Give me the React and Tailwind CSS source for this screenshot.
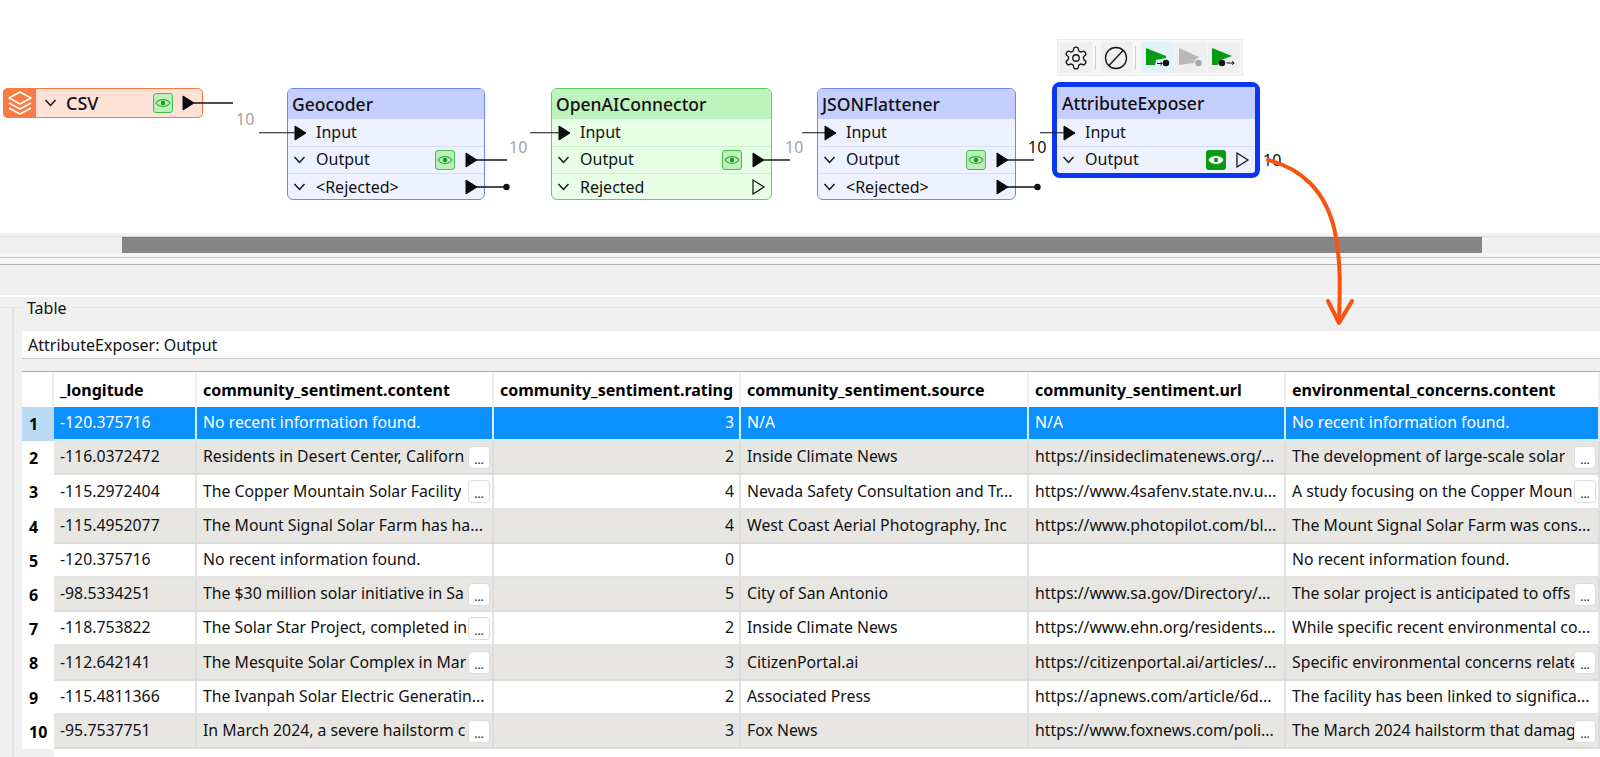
import React from "react";

const Tri = ({ open = false }) => (
  <svg width="13" height="16" viewBox="0 0 13 16" className="shrink-0">
    <polygon points="1,1 12,8 1,15" fill={open ? "none" : "#0a0a0a"} stroke="#0a0a0a" strokeWidth={open ? 1.2 : 1} />
  </svg>
);

const Chevron = () => (
  <svg width="13" height="8" viewBox="0 0 13 8" className="shrink-0">
    <path d="M1.5 1 L6.5 6.5 L11.5 1" fill="none" stroke="#111" strokeWidth="1.4" />
  </svg>
);

const Eye = ({ solid = false }) => (
  <div className={solid ? "flex h-[20px] w-[20px] items-center justify-center rounded-[3px] bg-[#079b12]" : "flex h-[20px] w-[20px] items-center justify-center rounded-[3px] border border-[#3fc04a] bg-[#bdf0b8]"}>
    <svg width="16" height="12" viewBox="0 0 16 12">
      <path d="M1 6 C4 1.5 12 1.5 15 6 C12 10.5 4 10.5 1 6 Z" fill={solid ? "#fff" : "none"} stroke={solid ? "#fff" : "#3aa845"} strokeWidth="1.1" />
      <circle cx="8" cy="6" r="2.2" fill={solid ? "#079b12" : "#0d9f1a"} />
    </svg>
  </div>
);

const Wire = ({ width, dot = false }) => (
  <svg width={width} height="8" viewBox={`0 0 ${width} 8`} className="absolute left-[8px] top-1/2 -translate-y-1/2">
    <line x1="0" y1="4" x2={width - (dot ? 3 : 0)} y2="4" stroke="#111" strokeWidth="1.4" />
    {dot && <circle cx={width - 3.5} cy="4" r="3.2" fill="#111" />}
  </svg>
);

const OutPort = ({ wire, dot, open }) => (
  <div className="relative flex h-[16px] w-[13px] shrink-0 items-center">
    <Tri open={open} />
    {wire ? <Wire width={wire} dot={dot} /> : null}
  </div>
);

const InRow = ({ tone, wire }) => (
  <div className={`relative flex h-[27px] items-center pl-[6px] text-[16px] ${tone}`}>
    <div className="relative flex h-[16px] w-[13px] shrink-0 items-center">
      <div className="absolute right-[8px] top-1/2 h-[1.5px] -translate-y-1/2 bg-[#111]" style={{ width: wire }} />
      <Tri />
    </div>
    <span className="ml-[9px] pb-[2px] text-[#111]">Input</span>
  </div>
);

const OutRow = ({ label, tone, eye, solid, wire, dot, open, last }) => (
  <div className={`flex ${last ? "h-[26px]" : "h-[27px]"} items-center pl-[5px] text-[16px] ${tone}`}>
    <Chevron />
    <span className={`ml-[10px] flex-1 text-[#111] ${last ? "" : "pb-[2px]"}`}>{label}</span>
    {eye ? <Eye solid={solid} /> : null}
    <div className="ml-[10px] mr-[6px]"><OutPort wire={wire} dot={dot} open={open} /></div>
  </div>
);

const Label = ({ children, className }) => (
  <div className={`absolute text-[16px] leading-[18px] ${className}`}>{children}</div>
);

const Canvas = () => (
  <div className="relative h-[233px] shrink-0 bg-white">
    {/* CSV reader */}
    <div className="absolute left-[3px] top-[88px] flex h-[30px] w-[200px] rounded-[5px] border border-[#f9784a] bg-[#fee1d7]">
      <div className="-ml-px -my-px flex h-[30px] w-[33px] items-center justify-center rounded-l-[5px] bg-[#fb7b45]">
        <svg width="28" height="26" viewBox="0 0 28 26" fill="none" stroke="#fff" strokeWidth="1.5" strokeLinejoin="round">
          <polygon points="14,2 25,8 14,14 3,8" />
          <path d="M3 13 L14 19 L25 13" />
          <path d="M3 18 L14 24 L25 18" />
        </svg>
      </div>
      <div className="flex flex-1 items-center pl-[8px]">
        <Chevron />
        <span className="ml-[9px] flex-1 text-[18px] font-medium text-[#111]">CSV</span>
        <Eye />
        <div className="ml-[9px] mr-[7px]"><OutPort wire={43} /></div>
      </div>
    </div>

    {/* Geocoder */}
    <div className="absolute left-[287px] top-[88px] w-[198px] overflow-visible rounded-[6px] border border-[#6b8ae8] bg-[#eef1ff]">
      <div className="flex h-[30px] items-center rounded-t-[5px] bg-[#c5cfff] pl-[4px] text-[17.5px] font-medium text-[#111]">Geocoder</div>
      <InRow tone="" wire={40} />
      <OutRow label="Output" tone="border-t border-[#d6ddfb]" eye wire={34} />
      <OutRow label="<Rejected>" tone="border-t border-[#d6ddfb]" wire={37} dot last />
    </div>

    {/* OpenAIConnector */}
    <div className="absolute left-[551px] top-[88px] w-[221px] rounded-[6px] border border-[#5fce6a] bg-[#e6ffe5]">
      <div className="flex h-[30px] items-center rounded-t-[5px] bg-[#bff3bd] pl-[4px] text-[17.5px] font-medium text-[#111]">OpenAIConnector</div>
      <InRow tone="" wire={33} />
      <OutRow label="Output" tone="border-t border-[#c8f2c8]" eye wire={30} />
      <OutRow label="Rejected" tone="border-t border-[#c8f2c8]" open last />
    </div>

    {/* JSONFlattener */}
    <div className="absolute left-[817px] top-[88px] w-[199px] rounded-[6px] border border-[#6b8ae8] bg-[#eef1ff]">
      <div className="flex h-[30px] items-center rounded-t-[5px] bg-[#c5cfff] pl-[4px] text-[17.5px] font-medium text-[#111]">JSONFlattener</div>
      <InRow tone="" wire={27} />
      <OutRow label="Output" tone="border-t border-[#d6ddfb]" eye wire={30} />
      <OutRow label="<Rejected>" tone="border-t border-[#d6ddfb]" wire={37} dot last />
    </div>

    {/* AttributeExposer */}
    <div className="absolute left-[1052px] top-[82px] w-[208px] rounded-[8px] border-[5px] border-[#0a37f0] bg-[#eef1ff]">
      <div className="flex h-[32px] items-center bg-[#c5cfff] pl-[5px] text-[17.5px] font-medium text-[#111]">AttributeExposer</div>
      <InRow tone="" wire={28} />
      <OutRow label="Output" tone="border-t border-[#d0d9fa]" eye solid open />
    </div>

    <Label className="left-[236px] top-[110px] text-[#a3a3a3]">10</Label>
    <Label className="left-[509px] top-[138px] text-[#a3a3a3]">10</Label>
    <Label className="left-[785px] top-[138px] text-[#a3a3a3]">10</Label>
    <Label className="left-[1028px] top-[138px] text-[#111]">10</Label>
    <Label className="left-[1263px] top-[151px] text-[#111]">10</Label>

    {/* Toolbar */}
    <div className="absolute left-[1057px] top-[39px] flex h-[37px] w-[186px] items-center gap-[1px] border border-[#ebebeb] bg-[#f6f6f6] px-[2px]">
      <div className="flex h-[31px] w-[32px] items-center justify-center bg-[#efefef]">
        <svg width="26" height="26" viewBox="0 0 24 24" fill="none" stroke="#111" strokeWidth="1.2" strokeLinejoin="round">
          <path d="M12.22 2h-.44a2 2 0 0 0-2 2v.18a2 2 0 0 1-1 1.73l-.43.25a2 2 0 0 1-2 0l-.15-.08a2 2 0 0 0-2.73.73l-.22.38a2 2 0 0 0 .73 2.73l.15.1a2 2 0 0 1 1 1.72v.51a2 2 0 0 1-1 1.74l-.15.09a2 2 0 0 0-.73 2.73l.22.38a2 2 0 0 0 2.73.73l.15-.08a2 2 0 0 1 2 0l.43.25a2 2 0 0 1 1 1.73V20a2 2 0 0 0 2 2h.44a2 2 0 0 0 2-2v-.18a2 2 0 0 1 1-1.73l.43-.25a2 2 0 0 1 2 0l.15.08a2 2 0 0 0 2.73-.73l.22-.39a2 2 0 0 0-.73-2.73l-.15-.08a2 2 0 0 1-1-1.74v-.5a2 2 0 0 1 1-1.74l.15-.09a2 2 0 0 0 .73-2.73l-.22-.38a2 2 0 0 0-2.73-.73l-.15.08a2 2 0 0 1-2 0l-.43-.25a2 2 0 0 1-1-1.73V4a2 2 0 0 0-2-2z" />
          <circle cx="12" cy="12" r="3" />
        </svg>
      </div>
      <div className="ml-[2px] mr-[4px] h-[24px] w-[1px] bg-[#cfcfcf]" />
      <div className="flex h-[31px] w-[32px] items-center justify-center bg-[#efefef]">
        <svg width="24" height="24" viewBox="0 0 24 24" fill="none" stroke="#111" strokeWidth="1.3">
          <circle cx="12" cy="12" r="10.5" />
          <line x1="5" y1="19.5" x2="19" y2="4.5" />
        </svg>
      </div>
      <div className="ml-[2px] mr-[4px] h-[24px] w-[1px] bg-[#cfcfcf]" />
      <div className="flex h-[31px] w-[33px] items-center justify-center bg-[#e3f1fb]">
        <svg width="32" height="31" viewBox="0 0 32 31">
          <polygon points="4,6 24,14 24,16 14,18 13,23 4,23" fill="#079b12" />
          <path d="M15 21.5 H20 M18.5 20 L20.5 21.5 L18.5 23" stroke="#111" strokeWidth="1" fill="none" />
          <circle cx="24" cy="21" r="3.2" fill="#111" />
        </svg>
      </div>
      <div className="flex h-[31px] w-[32px] items-center justify-center bg-[#efefef]">
        <svg width="32" height="31" viewBox="0 0 32 31">
          <polygon points="4,6 24,15 20,18 19,21 4,23" fill="#b9b9b9" />
          <circle cx="23.5" cy="21" r="3.2" fill="#a8a8a8" />
        </svg>
      </div>
      <div className="flex h-[31px] w-[32px] items-center justify-center bg-[#efefef]">
        <svg width="32" height="31" viewBox="0 0 32 31">
          <polygon points="4,6 24,14 13,18 10,23 4,23" fill="#079b12" />
          <circle cx="14" cy="21" r="3.2" fill="#111" />
          <path d="M18.5 21 H26 M24 19.3 L26.2 21 L24 22.7" stroke="#111" strokeWidth="1" fill="none" />
        </svg>
      </div>
    </div>
  </div>
);

const Arrow = () => (
  <svg className="pointer-events-none absolute left-0 top-0" width="1600" height="340" viewBox="0 0 1600 340" fill="none">
    <path d="M1268 160 C1300 168 1326 190 1335 232 C1341 262 1340 290 1339 322" stroke="#f8540f" strokeWidth="4" strokeLinecap="round" />
    <path d="M1328 301 L1339 323 L1352 301" stroke="#f8540f" strokeWidth="4" strokeLinecap="round" strokeLinejoin="round" />
  </svg>
);

const rows = [
  ["-120.375716", "No recent information found.", 0, "3", "N/A", "N/A", "No recent information found.", 0],
  ["-116.0372472", "Residents in Desert Center, Californ", 1, "2", "Inside Climate News", "https://insideclimatenews.org/...", "The development of large-scale solar", 1],
  ["-115.2972404", "The Copper Mountain Solar Facility", 1, "4", "Nevada Safety Consultation and Tr...", "https://www.4safenv.state.nv.u...", "A study focusing on the Copper Moun", 1],
  ["-115.4952077", "The Mount Signal Solar Farm has ha...", 0, "4", "West Coast Aerial Photography, Inc", "https://www.photopilot.com/bl...", "The Mount Signal Solar Farm was cons...", 0],
  ["-120.375716", "No recent information found.", 0, "0", "", "", "No recent information found.", 0],
  ["-98.5334251", "The $30 million solar initiative in Sa", 1, "5", "City of San Antonio", "https://www.sa.gov/Directory/...", "The solar project is anticipated to offs", 1],
  ["-118.753822", "The Solar Star Project, completed in", 1, "2", "Inside Climate News", "https://www.ehn.org/residents...", "While specific recent environmental co...", 0],
  ["-112.642141", "The Mesquite Solar Complex in Mar", 1, "3", "CitizenPortal.ai", "https://citizenportal.ai/articles/...", "Specific environmental concerns relate", 1],
  ["-115.4811366", "The Ivanpah Solar Electric Generatin...", 0, "2", "Associated Press", "https://apnews.com/article/6d...", "The facility has been linked to significa...", 0],
  ["-95.7537751", "In March 2024, a severe hailstorm c", 1, "3", "Fox News", "https://www.foxnews.com/poli...", "The March 2024 hailstorm that damag", 1],
];

const headers = ["_longitude", "community_sentiment.content", "community_sentiment.rating", "community_sentiment.source", "community_sentiment.url", "environmental_concerns.content"];

const gridCols = "grid grid-cols-[32px_143px_297px_247px_288px_257px_314px]";

const Cell = ({ children, button, right, tone }) => (
  <div className={`relative flex h-[34.2px] items-center overflow-hidden border-r-2 border-b-2 ${tone} ${right ? "justify-end pr-[5px]" : "pl-[6px]"}`}>
    <span className={`overflow-hidden whitespace-nowrap ${button ? "mr-[23px]" : ""}`}>{children}</span>
    {button ? (
      <div className="absolute right-[2px] top-[5px] flex h-[23px] w-[22px] items-end justify-center rounded-[4px] border border-[#dcdcdc] bg-white pb-[1px] text-[12px] leading-[14px] text-[#222]">...</div>
    ) : null}
  </div>
);

const Table = () => (
  <div className="flex-1 overflow-hidden">
    <div className={`${gridCols} h-[36px] border-t border-[#a9a9ae] bg-white text-[16px] font-bold text-black`}>
      <div className="border-r-2 border-[#eeeeee]" />
      {headers.map((h) => (
        <div key={h} className="flex items-center whitespace-nowrap border-r-2 border-[#eeeeee] pl-[6px]">{h}</div>
      ))}
    </div>
    {rows.map((r, i) => {
      const sel = i === 0;
      const gray = i % 2 === 1;
      const tone = sel
        ? "border-[#d8ecfd] bg-[#0a90ff] text-white"
        : gray
        ? "border-[#dcdcdc] bg-[#e7e6e3] text-[#111]"
        : "border-[#e3e3e3] bg-white text-[#111]";
      return (
        <div key={i} className={`${gridCols} text-[15.8px]`}>
          <div className={`flex h-[34.2px] items-center pl-[7px] text-[16px] font-bold text-black ${sel ? "bg-[#b8daf3]" : "bg-white"}`}>{i + 1}</div>
          <Cell tone={tone}>{r[0]}</Cell>
          <Cell tone={tone} button={r[2]}>{r[1]}</Cell>
          <Cell tone={tone} right>{r[3]}</Cell>
          <Cell tone={tone}>{r[4]}</Cell>
          <Cell tone={tone}>{r[5]}</Cell>
          <Cell tone={tone} button={r[7]}>{r[6]}</Cell>
        </div>
      );
    })}
    <div className={gridCols}>
      <div className="h-[8px] bg-[#f0f0f0]" />
      <div className="col-span-6 h-[8px] bg-white" />
    </div>
  </div>
);

export default function App() {
  return (
    <div className="relative flex h-[757px] w-[1600px] flex-col overflow-hidden bg-[#f0f0f0] font-['Noto_Sans',sans-serif] text-[#111]">
      <Canvas />
      <div className="h-[4px] shrink-0 border-b border-[#dddddd] bg-[#f2f2f2]" />
      <div className="flex h-[16px] shrink-0 pl-[122px]">
        <div className="h-[16px] w-[1360px] border-t border-[#777] bg-[#858585]" />
      </div>
      <div className="h-[5px] shrink-0 border-b border-[#c4c4c4] bg-[#f6f6f6]" />
      <div className="h-[7px] shrink-0 border-b border-[#b4b4b4] bg-[#f6f6f6]" />
      <div className="h-[32px] shrink-0 border-b-2 border-white" />
      <div className="flex min-h-0 flex-1 pt-[10px]">
        <div className="w-[13px] shrink-0 border-r border-t border-[#e4e4e4]" />
        <div className="relative flex min-w-0 flex-1 flex-col border-l border-t border-[#e4e4e4] pl-[8px] pt-[23px]">
          <div className="absolute -top-[10px] left-[8px] bg-[#f0f0f0] px-[5px] text-[16px] leading-[20px]">Table</div>
          <div className="flex h-[28px] shrink-0 items-center border-b border-[#cfcfcf] bg-white pl-[6px] text-[16px]">AttributeExposer: Output</div>
          <div className="h-[12px] shrink-0" />
          <Table />
        </div>
      </div>
      <Arrow />
    </div>
  );
}
